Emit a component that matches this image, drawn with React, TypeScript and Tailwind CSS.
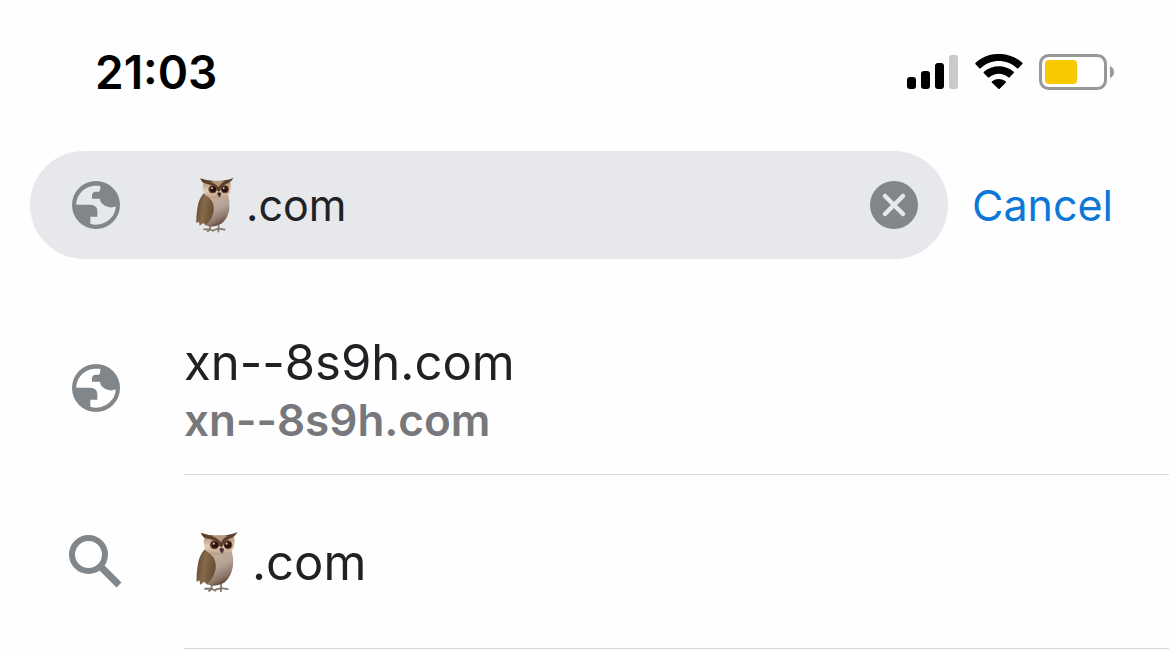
import { useState } from "react";

function Globe() {
  return (
    <svg viewBox="0 0 144 144" className="size-12 shrink-0" aria-hidden="true">
      <circle cx="72" cy="72" r="72" fill="#80868a" />
      <path
        className="fill-current"
        d="M13 71H57Q76 73 76 91V107H55V128Q63 131 72 131C104 131 131 106 131 76Q124 80 113 79Q98 77 89 67Q84 60 84 53H60V43Q60 33 72 32H81Q85 30 85 15C45 8 13 36 13 71Z"
      />
    </svg>
  );
}

function Owl({ className }: { className: string }) {
  return (
    <svg viewBox="0 0 120 174" className={className} role="img" aria-label="Owl">
      <defs>
        <linearGradient id="wing" x1="0" y1="0" x2="1" y2="0.3">
          <stop offset="0" stopColor="#5b432c" />
          <stop offset="0.5" stopColor="#87694a" />
          <stop offset="1" stopColor="#6b4f35" />
        </linearGradient>
        <linearGradient id="belly" x1="0.2" y1="0" x2="0.6" y2="1">
          <stop offset="0" stopColor="#c9b49c" />
          <stop offset="0.5" stopColor="#b3a297" />
          <stop offset="0.8" stopColor="#8b7465" />
          <stop offset="1" stopColor="#4f382a" />
        </linearGradient>
        <linearGradient id="face" x1="0" y1="0" x2="0" y2="1">
          <stop offset="0" stopColor="#a8896b" />
          <stop offset="0.55" stopColor="#e2cfb8" />
          <stop offset="1" stopColor="#b79a80" />
        </linearGradient>
      </defs>
      <path
        d="M48 148V160L30 160M48 160L41 166M48 160L58 165M74 147V158L60 162M74 158L73 167M74 158L92 161"
        stroke="#86776b"
        strokeWidth="5"
        strokeLinecap="round"
        fill="none"
      />
      <path fill="url(#belly)" d="M36 54Q70 74 102 55Q109 76 106 99Q102 126 84 142Q70 151 50 152L32 147Z" />
      <path fill="url(#wing)" d="M29 52Q13 70 10 98Q6 119 7 141L15 137L17 149L28 141L35 147Q54 131 59 106Q62 82 47 67Z" />
      <path fill="url(#face)" d="M29 18Q52 20 71 22Q94 21 107 14Q115 34 107 51Q95 67 76 67Q48 70 34 56Q22 40 29 18Z" />
      <path fill="#5b402e" d="M19 7Q42 16 65 15Q83 16 97 12Q109 10 119 5Q112 17 103 21Q86 27 79 43L75 48L68 42Q56 26 36 23Q22 21 19 7Z" />
      <path fill="#b6967a" d="M49 17Q72 12 91 17Q80 21 74 34Q65 22 49 17Z" />
      <ellipse cx="56" cy="40" rx="13" ry="12" fill="#74432c" />
      <ellipse cx="93" cy="40" rx="12" ry="12" fill="#74432c" />
      <circle cx="57" cy="40" r="9" fill="#24120f" />
      <circle cx="92" cy="40" r="9" fill="#24120f" />
      <circle cx="54" cy="37" r="3" fill="#dccabb" />
      <circle cx="89" cy="37" r="3" fill="#dccabb" />
      <path fill="#44332c" d="M69 51Q75 46 82 51Q81 60 76 64Q70 59 69 51Z" />
    </svg>
  );
}

function StatusIcons() {
  return (
    <div className="flex items-center">
      <svg viewBox="0 0 52 36" className="mr-4 h-9 w-[52px]" role="img" aria-label="Signal">
        <rect x="0" y="23" width="9" height="12" rx="3" />
        <rect x="14" y="17" width="9" height="18" rx="3" />
        <rect x="28" y="9" width="9" height="26" rx="3" />
        <rect x="42" y="1" width="9" height="34" rx="3" fill="#cacaca" />
      </svg>
      <svg viewBox="0 0 144 108" className="mr-4 h-9 w-12" role="img" aria-label="Wi-Fi">
        <path d="M1 30Q0 28 2 26C41-9 102-9 142 26Q144 28 142 30L130 43Q128 44 126 43C95 14 48 14 17 43Q15 44 13 43ZM26 57Q25 55 27 53C52 31 91 31 116 53Q118 55 116 57L104 70Q102 72 100 70C83 56 60 56 43 70Q41 72 39 70ZM51 82Q71 68 92 82Q94 84 92 86L74 104Q72 106 70 104L51 86Q49 84 51 82Z" />
      </svg>
      <svg viewBox="0 0 76 36" className="h-9 w-[76px]" role="img" aria-label="Battery">
        <rect x="1.5" y="1.5" width="65" height="33" rx="8" fill="white" stroke="#989898" strokeWidth="3" />
        <rect x="6" y="6" width="32" height="24" rx="4" fill="#f9c900" />
        <path d="M71 12Q75 14 75 18Q75 22 71 24Z" fill="#989898" />
      </svg>
    </div>
  );
}

export default function App() {
  const [query, setQuery] = useState(".com");
  return (
    <main className="min-h-screen bg-[#fefefe] font-['Inter',sans-serif] text-[#202124]">
      <header className="flex h-36 items-center justify-between pr-[54px] pl-[95px] text-black">
        <time className="text-[46px] leading-none font-semibold">21:03</time>
        <StatusIcons />
      </header>
      <form className="mt-[7px] flex items-center pr-14 pl-[30px]" onSubmit={(e) => e.preventDefault()}>
        <div className="flex h-[108px] min-w-0 flex-1 items-center rounded-full bg-[#e7e8ec] pr-[30px] pl-[42px]">
          <span className="flex text-[#e7e8ec]"><Globe /></span>
          <Owl className="ml-[74px] h-[58px] w-10 shrink-0" />
          <input
            aria-label="Address"
            className="ml-3 min-w-0 flex-1 bg-transparent text-[43px] leading-none outline-none"
            value={query}
            onChange={(e) => setQuery(e.target.value)}
          />
          <button type="button" aria-label="Clear" className="shrink-0" onClick={() => setQuery("")}>
            <svg viewBox="0 0 48 48" className="size-12">
              <circle cx="24" cy="24" r="24" fill="#80868a" />
              <path d="M15 15L33 33M33 15L15 33" stroke="#e7e8ec" strokeWidth="4.5" strokeLinecap="round" />
            </svg>
          </button>
        </div>
        <button type="button" className="ml-6 text-[43px] leading-none text-[#0b78d8]">Cancel</button>
      </form>
      <ul className="mt-[42px]">
        <li>
          <a href="#site" className="flex items-center pl-[72px]">
            <span className="flex text-[#fefefe]"><Globe /></span>
            <span className="ml-16 flex h-[174px] min-w-0 flex-1 flex-col justify-center border-b border-[#d8d8da] pt-1">
              <span className="text-[49px] leading-[60px]">xn--8s9h.com</span>
              <span className="text-[44px] leading-[54px] font-semibold text-[#77787c]">xn--8s9h.com</span>
            </span>
          </a>
        </li>
        <li>
          <a href="#search" className="flex items-center pl-[68px]">
            <svg viewBox="0 0 54 54" className="size-[54px] shrink-0" fill="none" stroke="#80868a" aria-hidden="true">
              <circle cx="20.5" cy="19.5" r="16.5" strokeWidth="6" />
              <path d="M32 31L51 50" strokeWidth="7" />
            </svg>
            <span className="ml-[62px] flex h-[174px] min-w-0 flex-1 items-center border-b border-[#d8d8da] pl-2.5">
              <Owl className="h-[64px] w-11 shrink-0" />
              <span className="ml-3.5 pt-0.5 text-[49px] leading-[60px]">.com</span>
            </span>
          </a>
        </li>
      </ul>
    </main>
  );
}
